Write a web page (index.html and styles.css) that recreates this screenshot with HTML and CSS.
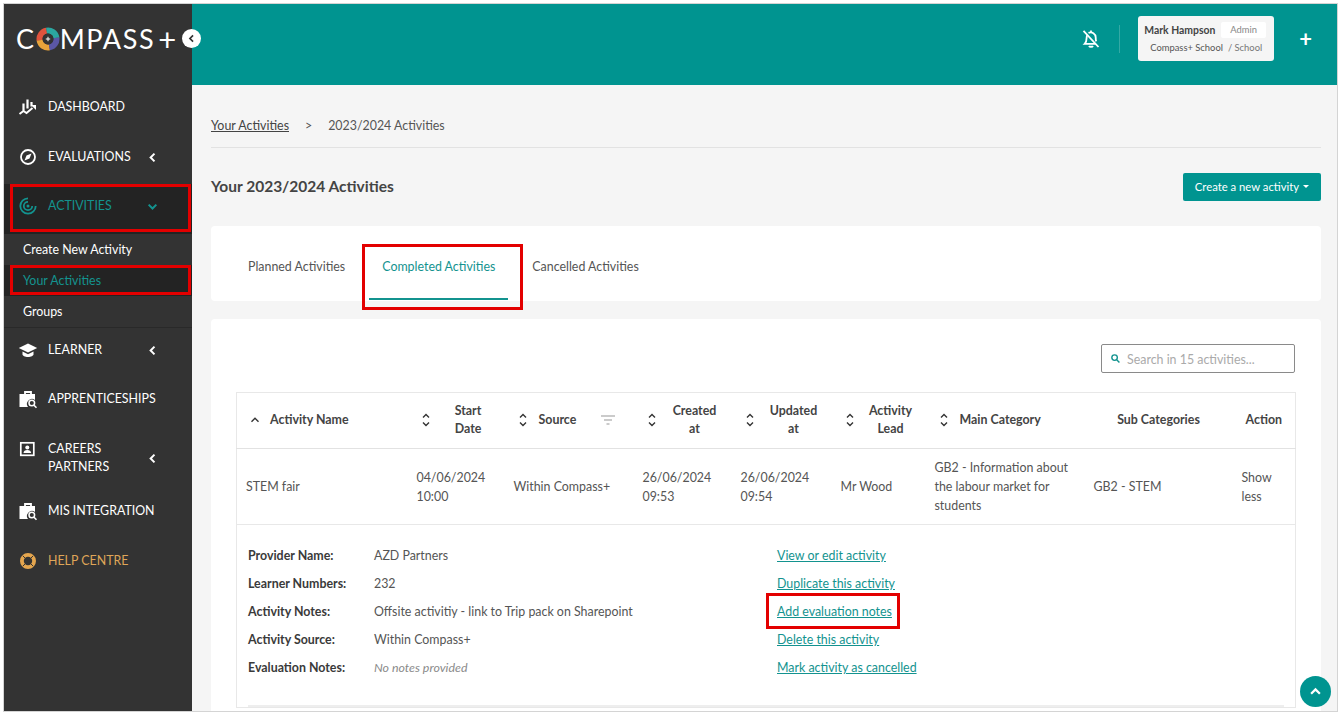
FILE: index.html
```html
<!DOCTYPE html>
<html lang="en">
<head>
<meta charset="utf-8">
<title>Your Activities</title>
<link rel="stylesheet" href="styles.css">
</head>
<body>
<div class="frame">
  <aside class="sidebar">
    <div class="brand">
      <span class="logo">C<svg class="logo-o" viewBox="0 0 24 24"><circle cx="12" cy="12" r="8.500" fill="none" stroke="#e0533d" stroke-width="6" stroke-dasharray="13.400 40" transform="rotate(170 12 12)"/><circle cx="12" cy="12" r="8.500" fill="none" stroke="#e8a33a" stroke-width="6" stroke-dasharray="13.400 40" transform="rotate(80 12 12)"/><circle cx="12" cy="12" r="8.500" fill="none" stroke="#5b57a6" stroke-width="6" stroke-dasharray="13.400 40" transform="rotate(-10 12 12)"/><circle cx="12" cy="12" r="8.500" fill="none" stroke="#2ba6a0" stroke-width="6" stroke-dasharray="13.400 40" transform="rotate(-100 12 12)"/><circle cx="12" cy="12" r="5.400" fill="#333"/><path d="M12 9.800v4.400M9.800 12h4.400" stroke="#fff" stroke-width="1"/></svg>MPASS<span class="logo-plus">+</span></span>
      <button class="collapse" aria-label="Collapse"><svg viewBox="0 0 10 10"><path d="M6.200 2.600 3.800 5l2.400 2.400" fill="none" stroke="#333" stroke-width="1.300"/></svg></button>
    </div>
    <nav class="nav">
      <a class="item i-dash"><svg class="ico" viewBox="0 0 20 20"><path d="M5.500 6.500v7M9.500 2.500v9M13.500 5v4.500" fill="none" stroke="#fff" stroke-width="2.200"/><path d="M1.500 17l4-3 3 2 6-5" fill="none" stroke="#fff" stroke-width="1.900"/><path d="M13 8h5v5z" fill="#fff"/></svg><span>DASHBOARD</span></a>
      <a class="item i-eval"><svg class="ico" viewBox="0 0 20 20"><circle cx="10" cy="10" r="7" fill="none" stroke="#fff" stroke-width="1.800"/><path d="M13.500 6.500 11.500 11.500 6.500 13.500 8.500 8.500z" fill="#fff"/></svg><span class="label">EVALUATIONS</span><svg class="chev" viewBox="0 0 10 10"><path d="M6.800 1.500 3.300 5l3.500 3.500" fill="none" stroke="#fff" stroke-width="1.800"/></svg></a>
      <a class="item i-act active"><svg class="ico" viewBox="0 0 20 20"><g fill="none" stroke="#13938f" stroke-width="1.800"><path d="M10 2.300a7.700 7.700 0 1 0 7.700 7.700"/><path d="M10 5.800a4.200 4.200 0 1 0 4.200 4.200"/></g><circle cx="10" cy="10" r="1.500" fill="#13938f"/></svg><span class="label">ACTIVITIES</span><svg class="chev" viewBox="0 0 10 10"><path d="M1.500 3.300 5 6.800l3.500-3.500" fill="none" stroke="#13938f" stroke-width="1.800"/></svg></a>
      <div class="sub">
        <a class="sub-item">Create New Activity</a>
        <a class="sub-item current">Your Activities</a>
        <a class="sub-item">Groups</a>
      </div>
      <a class="item i-learn"><svg class="ico" viewBox="0 0 20 20"><path d="M10 3.500 0.800 8 10 12.500 19.200 8z" fill="#fff"/><path d="M4.500 11.500v3c0 1 2.500 2.500 5.500 2.500s5.500-1.500 5.500-2.500v-3L10 14.200z" fill="#fff"/></svg><span class="label">LEARNER</span><svg class="chev" viewBox="0 0 10 10"><path d="M6.800 1.500 3.300 5l3.500 3.500" fill="none" stroke="#fff" stroke-width="1.800"/></svg></a>
      <a class="item i-app"><svg class="ico" viewBox="0 0 20 20"><path d="M7 5V3h6v2" fill="none" stroke="#fff" stroke-width="1.800"/><path d="M1.500 5h15.500v6a5 5 0 0 0-7 7H1.500z" fill="#fff"/><circle cx="13.800" cy="14" r="2.800" fill="none" stroke="#fff" stroke-width="1.500"/><path d="m16 16.200 2.500 2.500" stroke="#fff" stroke-width="1.600"/></svg><span>APPRENTICESHIPS</span></a>
      <a class="item i-care"><svg class="ico" viewBox="0 0 20 20"><rect x="2.800" y="2.800" width="13" height="12.500" fill="none" stroke="#fff" stroke-width="1.700"/><circle cx="9.300" cy="7.500" r="2" fill="#fff"/><path d="M5.500 13c0-2 1.700-3 3.800-3s3.800 1 3.800 3z" fill="#fff"/></svg><span class="label">CAREERS<br>PARTNERS</span><svg class="chev" viewBox="0 0 10 10"><path d="M6.800 1.500 3.300 5l3.500 3.500" fill="none" stroke="#fff" stroke-width="1.800"/></svg></a>
      <a class="item i-mis"><svg class="ico" viewBox="0 0 20 20"><path d="M7 5V3h6v2" fill="none" stroke="#fff" stroke-width="1.800"/><path d="M1.500 5h15.500v6a5 5 0 0 0-7 7H1.500z" fill="#fff"/><circle cx="13.800" cy="14" r="2.800" fill="none" stroke="#fff" stroke-width="1.500"/><path d="m16 16.200 2.500 2.500" stroke="#fff" stroke-width="1.600"/></svg><span>MIS INTEGRATION</span></a>
      <a class="item i-help"><svg class="ico" viewBox="0 0 20 20"><circle cx="10" cy="10" r="6.100" fill="none" stroke="#e5a64e" stroke-width="3.800"/><path d="M4.700 4.700l2.500 2.500M15.300 4.700l-2.500 2.500M4.700 15.300l2.500-2.500M15.300 15.300l-2.500-2.500" stroke="#333" stroke-width="1"/></svg><span>HELP CENTRE</span></a>
    </nav>
  </aside>
  <div class="main">
    <header class="topbar">
      <svg class="bell" viewBox="0 0 20 20"><g fill="none" stroke="#fff" stroke-width="1.800"><path d="M6.500 5.800c-.6.9-.9 2-.9 3.200 0 2.800-.5 4.400-1.900 5.800h11"/><path d="M7.500 3.900A5 5 0 0 1 14.700 8.500c0 1.500.1 2.800.5 3.900"/><path d="M8 17c.5 1 3.500 1 4 0"/><path d="M10 1.500V3"/><path d="M2.500 1.800 17.500 18"/></g></svg>
      <span class="divider"></span>
      <div class="user">
        <div class="user-top"><b>Mark Hampson</b><span class="role">Admin</span></div>
        <div class="user-bot"><span>Compass+ School</span><span>/ School</span></div>
      </div>
      <span class="add">+</span>
    </header>
    <div class="content">
      <div class="crumbs"><a>Your Activities</a><span class="gt">&gt;</span><span>2023/2024 Activities</span></div>
      <div class="title-row">
        <h1>Your 2023/2024 Activities</h1>
        <button class="create">Create a new activity<i class="caret"></i></button>
      </div>
      <div class="tabs">
        <a class="tab">Planned Activities</a>
        <a class="tab on">Completed Activities</a>
        <a class="tab">Cancelled Activities</a>
      </div>
      <section class="card">
        <div class="search-row">
          <div class="search"><svg viewBox="0 0 12 12"><circle cx="5" cy="5" r="3" fill="none" stroke="#13938f" stroke-width="1.500"/><path d="m7.300 7.300 3 3" stroke="#13938f" stroke-width="1.600"/></svg><span>Search in 15 activities...</span></div>
        </div>
        <table class="tbl">
          <colgroup><col class="c1"><col class="c2"><col class="c3"><col class="c4"><col class="c5"><col class="c6"><col class="c7"><col class="c8"><col class="c9"></colgroup>
          <thead>
            <tr>
              <th><div class="th"><svg class="up" viewBox="0 0 10 10"><path d="M1.500 6.800 5 3.300l3.500 3.500" fill="none" stroke="#333" stroke-width="1.400"/></svg>Activity Name</div></th>
              <th><div class="th"><svg class="sort" viewBox="0 0 10 16"><path d="M2 5.500 5 2.500l3 3M2 10.500l3 3 3-3" fill="none" stroke="#333" stroke-width="1.400"/></svg><span class="ctr">Start<br>Date</span></div></th>
              <th><div class="th"><svg class="sort" viewBox="0 0 10 16"><path d="M2 5.500 5 2.500l3 3M2 10.500l3 3 3-3" fill="none" stroke="#333" stroke-width="1.400"/></svg>Source<svg class="filter" viewBox="0 0 16 12"><path d="M1 2h14M4 6h8M6.500 10h3" stroke="#bbb" stroke-width="1.300"/></svg></div></th>
              <th><div class="th"><svg class="sort" viewBox="0 0 10 16"><path d="M2 5.500 5 2.500l3 3M2 10.500l3 3 3-3" fill="none" stroke="#333" stroke-width="1.400"/></svg><span class="ctr">Created<br>at</span></div></th>
              <th><div class="th"><svg class="sort" viewBox="0 0 10 16"><path d="M2 5.500 5 2.500l3 3M2 10.500l3 3 3-3" fill="none" stroke="#333" stroke-width="1.400"/></svg><span class="ctr">Updated<br>at</span></div></th>
              <th><div class="th"><svg class="sort" viewBox="0 0 10 16"><path d="M2 5.500 5 2.500l3 3M2 10.500l3 3 3-3" fill="none" stroke="#333" stroke-width="1.400"/></svg><span class="ctr">Activity<br>Lead</span></div></th>
              <th><div class="th"><svg class="sort" viewBox="0 0 10 16"><path d="M2 5.500 5 2.500l3 3M2 10.500l3 3 3-3" fill="none" stroke="#333" stroke-width="1.400"/></svg>Main Category</div></th>
              <th class="mid">Sub Categories</th>
              <th class="mid">Action</th>
            </tr>
          </thead>
          <tbody>
            <tr>
              <td>STEM fair</td>
              <td>04/06/2024<br>10:00</td>
              <td>Within Compass+</td>
              <td>26/06/2024<br>09:53</td>
              <td>26/06/2024<br>09:54</td>
              <td>Mr Wood</td>
              <td>GB2 - Information about the labour market for students</td>
              <td>GB2 - STEM</td>
              <td>Show less</td>
            </tr>
            <tr>
              <td colspan="9" class="detail-cell">
                <div class="detail">
                  <dl class="facts">
                    <dt>Provider Name:</dt><dd>AZD Partners</dd>
                    <dt>Learner Numbers:</dt><dd>232</dd>
                    <dt>Activity Notes:</dt><dd>Offsite activitiy - link to Trip pack on Sharepoint</dd>
                    <dt>Activity Source:</dt><dd>Within Compass+</dd>
                    <dt>Evaluation Notes:</dt><dd class="none">No notes provided</dd>
                  </dl>
                  <div class="links">
                    <a>View or edit activity</a>
                    <a>Duplicate this activity</a>
                    <a>Add evaluation notes</a>
                    <a>Delete this activity</a>
                    <a>Mark activity as cancelled</a>
                  </div>
                </div>
                <div class="rule"></div>
              </td>
            </tr>
          </tbody>
        </table>
      </section>
    </div>
    <a class="to-top" aria-label="Back to top"><svg viewBox="0 0 12 12"><path d="M2.500 7.800 6 4.300l3.500 3.500" fill="none" stroke="#fff" stroke-width="1.800"/></svg></a>
  </div>
  <span class="mark m1"></span>
  <span class="mark m2"></span>
  <span class="mark m3"></span>
  <span class="mark m4"></span>
</div>
</body>
</html>
```
FILE: styles.css
```css
* { box-sizing: border-box; }
html, body { margin: 0; height: 100%; background: #fff; overflow: hidden; }
body { font-family: "Lato", "Liberation Sans", sans-serif; font-size: 12.400px; color: #444; padding: 3px 0 0 3px; }
.frame { position: relative; width: 1335px; height: 709px; border: 1px solid #d4d4d4; display: flex; overflow: hidden; background: #f5f5f5; }
a { color: inherit; }
svg { display: block; flex: none; }

.sidebar { width: 188px; flex: none; background: #333; color: #fff; }
.brand { height: 77px; position: relative; padding: 17px 0 0 12px; }
.logo { display: flex; align-items: center; font-size: 27px; line-height: 36px; color: #fff; letter-spacing: 1.600px; }
.logo-o { width: 24px; height: 24px; }
.logo-plus { margin-left: 3px; font-size: 31px; }
.collapse { position: absolute; right: -9px; top: 25px; width: 19px; height: 19px; border-radius: 50%; background: #fff; border: 0; padding: 3px; z-index: 3; }
.nav { display: flex; flex-direction: column; }
.item { display: flex; align-items: center; padding: 2px 0 0 14px; color: #fff; font-size: 12.400px; line-height: 18px; height: 50px; }
.item .ico { width: 20px; height: 20px; margin-right: 10px; }
.item .label { width: 95px; }
.chev { width: 11px; height: 11px; margin: 1px 0 0 4px; }
.i-act { color: #13938f; background: #232323; height: 50px; margin-top: 3px; padding-bottom: 8px; }
.sub { display: flex; flex-direction: column; border-bottom: 1px solid #292929; }
.sub-item { height: 31px; line-height: 32px; padding-left: 19px; font-size: 12.400px; color: #fff; }
.current { color: #13938f; background: #232323; }
.i-learn { height: 42px; }
.i-app { height: 56px; }
.i-care { height: 62px; }
.i-care .ico { margin-top: -16px; }
.i-mis { height: 44px; }
.i-help { height: 56px; color: #dfa558; }

.main { flex: 1; min-width: 0; display: flex; flex-direction: column; position: relative; }
.topbar { height: 81px; flex: none; background: #009490; display: flex; align-items: center; padding: 0 25px 12px 0; justify-content: flex-end; }
.bell { width: 20px; height: 20px; margin-right: 18px; }
.divider { width: 1px; height: 28px; background: #34a9a5; margin-right: 18px; }
.user { width: 136px; height: 45px; background: #f5f5f5; border-radius: 3px; padding: 5px 0 0 6px; color: #555; }
.user-top { display: flex; align-items: center; height: 17px; }
.user-top b { font-weight: 700; color: #444; font-size: 10.400px; }
.role { background: #fff; margin-left: 6px; padding: 0 9px; line-height: 16px; color: #888; font-size: 9.400px; border-radius: 2px; }
.user-bot { margin-top: 2px; padding-left: 6px; display: flex; gap: 5px; font-size: 9.400px; line-height: 15px; }
.user-bot span + span { color: #777; }
.add { color: #fff; font-size: 22px; line-height: 1; margin-left: 25px; font-weight: 700; }

.content { flex: 1; min-height: 0; padding: 0 16px 0 19px; overflow: hidden; }
.crumbs { height: 63px; padding-top: 32px; border-bottom: 1px solid #e2e2e2; display: flex; line-height: 18px; color: #555; }
.crumbs a { text-decoration: underline; color: #444; }
.gt { margin: 0 16px; }
.title-row { height: 78px; display: flex; justify-content: space-between; align-items: center; }
h1 { margin: -2px 0 0; font-size: 15.500px; font-weight: 700; color: #444; }
.create { background: #009490; color: #fff; border: 0; border-radius: 2px; height: 28px; width: 138px; font: 11.300px "Lato", sans-serif; padding: 0 0 2px; display: flex; align-items: center; justify-content: center; }
.caret { width: 0; height: 0; border: 3px solid transparent; border-top-color: #fff; border-bottom: 0; margin-left: 4px; }
.tabs { height: 75px; background: #fff; border-radius: 4px; padding-left: 24px; display: flex; gap: 11px; }
.tab { color: #555; line-height: 82px; height: 74px; padding: 0 13px; }
.tab.on { color: #13938f; position: relative; }
.tab.on::after { content: ""; position: absolute; left: 0; right: 0; bottom: 0; height: 2px; background: #13938f; }
.card { margin-top: 18px; background: #fff; border-radius: 4px; padding: 0 25px; height: 420px; }
.search-row { height: 73px; display: flex; justify-content: flex-end; padding-top: 25px; }
.search { width: 194px; height: 29px; margin-right: 1px; border: 1px solid #8a8a8a; border-radius: 2px; display: flex; align-items: center; padding: 2px 0 0 8px; color: #aaa; font-size: 12.400px; gap: 6px; }
.search svg { width: 11px; height: 11px; margin-top: -2px; }
.tbl { width: 1059px; border-collapse: collapse; table-layout: fixed; border: 1px solid #e8e8e8; line-height: 19px; color: #555; }
.c1 { width: 171px; } .c2 { width: 97px; } .c3 { width: 129px; } .c4 { width: 98px; } .c5 { width: 100px; } .c6 { width: 94px; } .c7 { width: 159px; } .c8 { width: 148px; } .c9 { width: 63px; }
th { height: 56px; font-weight: 700; text-align: left; color: #444; border-bottom: 1px solid #e2e2e2; padding: 0 0 1px; line-height: 18px; }
th.mid { text-align: center; }
.th { display: flex; align-items: center; padding-left: 13px; }
.up { width: 10px; height: 10px; margin-right: 10px; }
.sort { width: 10px; height: 16px; margin-right: 11px; }
.ctr { display: block; text-align: center; flex: 1; padding-right: 10px; }
.filter { width: 16px; height: 12px; margin-left: 24px; }
td { padding: 0 9px; height: 76px; border-bottom: 1px solid #e8e8e8; vertical-align: middle; }
td.detail-cell { padding: 0 11px; border: 0; height: auto; vertical-align: top; }
.detail { display: flex; padding-top: 17px; height: 180px; }
.facts { margin: 0; display: grid; grid-template-columns: 126px 403px; grid-auto-rows: 28px; line-height: 28px; }
dt { color: #3a3a3a; font-weight: 700; }
dd { margin: 0; }
.none { font-style: italic; color: #8a8a8a; }
.links { display: grid; grid-auto-rows: 28px; line-height: 28px; color: #13938f; }
.links a { text-decoration: underline; white-space: nowrap; }
.rule { height: 2px; background: #eee; }
.to-top { position: absolute; right: 6px; bottom: 4px; width: 31px; height: 31px; border-radius: 50%; background: #009490; padding: 8px; z-index: 4; }

.mark { position: absolute; border: 3px solid #e30000; z-index: 5; pointer-events: none; }
.m1 { left: 6px; top: 180px; width: 181px; height: 48px; }
.m2 { left: 6px; top: 261px; width: 181px; height: 30px; }
.m3 { left: 358px; top: 240px; width: 161px; height: 66px; }
.m4 { left: 762px; top: 589px; width: 134px; height: 36px; }
```
